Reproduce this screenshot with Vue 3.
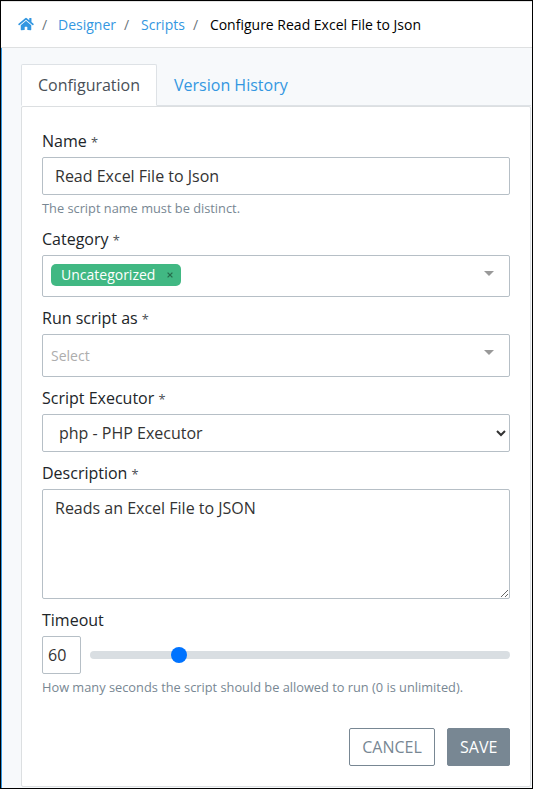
<script setup>
import { ref } from 'vue'

const name = ref('Read Excel File to Json')
const category = ref('Uncategorized')
const executor = ref('php')
const description = ref('Reads an Excel File to JSON')
const timeout = ref(60)
</script>

<template>
  <div class="page">
    <nav class="breadcrumb">
      <a class="home" href="#" aria-label="Home">
        <svg viewBox="0 0 576 512" width="16" height="14">
          <path
            fill="currentColor"
            d="M280.4 148.3 96 300.100V464a16 16 0 0 0 16 16l112.100-.3a16 16 0 0 0 15.900-16V368a16 16 0 0 1 16-16h64a16 16 0 0 1 16 16v95.600a16 16 0 0 0 16 16.100L464 480a16 16 0 0 0 16-16V300L295.700 148.300a12.200 12.200 0 0 0-15.300 0zM571.600 251.500 488 182.600V44a12 12 0 0 0-12-12h-56a12 12 0 0 0-12 12v72.600L318.500 43a48 48 0 0 0-61 0L4.300 251.500a12 12 0 0 0-1.600 16.900l25.500 31a12 12 0 0 0 16.900 1.600l235.200-193.700a12.200 12.200 0 0 1 15.300 0L530.900 301a12 12 0 0 0 16.900-1.600l25.500-31a12 12 0 0 0-1.700-16.900z"
          />
        </svg>
      </a>
      <span class="sep first">/</span>
      <a class="crumb" href="#">Designer</a>
      <span class="sep">/</span>
      <a class="crumb" href="#">Scripts</a>
      <span class="sep">/</span>
      <span class="current">Configure Read Excel File to Json</span>
    </nav>

    <main class="content">
      <div class="tabs">
        <a class="tab active" href="#">Configuration</a>
        <a class="tab" href="#">Version History</a>
      </div>

      <form class="card" @submit.prevent>
        <div class="group">
          <label for="name">Name <small>*</small></label>
          <input id="name" v-model="name" class="control" type="text" />
          <p class="help">The script name must be distinct.</p>
        </div>

        <div class="group">
          <label>Category <small>*</small></label>
          <div class="multi category">
            <span class="tag">{{ category }}
              <svg viewBox="0 0 6 6" width="6" height="6"><path d="M.6.6 5.400 5.400M5.400.6.6 5.400" stroke="#266d4d" stroke-width="1.300" /></svg>
            </span>
            <i class="caret"></i>
          </div>
        </div>

        <div class="group">
          <label>Run script as <small>*</small></label>
          <div class="multi run-as">
            <span class="placeholder">Select</span>
            <i class="caret"></i>
          </div>
        </div>

        <div class="group">
          <label for="executor">Script Executor <small>*</small></label>
          <select id="executor" v-model="executor" class="control">
            <option value="php">php - PHP Executor</option>
          </select>
        </div>

        <div class="group">
          <label for="description">Description <small>*</small></label>
          <textarea id="description" v-model="description" class="control" spellcheck="false"></textarea>
        </div>

        <div class="group">
          <label for="timeout">Timeout</label>
          <div class="timeout">
            <input id="timeout" v-model="timeout" class="control seconds" type="text" />
            <input v-model="timeout" class="range" type="range" min="0" max="300" aria-label="Timeout" />
          </div>
          <p class="help">How many seconds the script should be allowed to run (0 is unlimited).</p>
        </div>

        <div class="actions">
          <button type="button" class="btn outline">CANCEL</button>
          <button type="submit" class="btn solid">SAVE</button>
        </div>
      </form>
    </main>
  </div>
</template>

<style>
body {
  margin: 0;
  overflow: hidden;
}
</style>

<style scoped>
* {
  box-sizing: border-box;
}
.page {
  display: flex;
  flex-direction: column;
  width: 533px;
  height: 789px;
  border: 1px solid #000;
  background: #f7f9fb;
  color: #212529;
  font: 16px/24px 'Open Sans', 'Noto Sans', sans-serif;
}
a {
  color: #3397e1;
  text-decoration: none;
}
.breadcrumb {
  display: flex;
  align-items: center;
  height: 47px;
  padding: 0 0 1px 17px;
  border-top: 1px solid #e4e4e4;
  border-bottom: 1px solid #dee0e1;
  background: #fff;
  font-size: 14px;
  line-height: 21px;
  white-space: nowrap;
}
.home {
  display: flex;
}
.sep {
  width: 25px;
  padding-left: 8px;
  color: #6c757d;
}
.sep.first {
  width: 24px;
}
.current {
  color: #000;
}
.content {
  flex: 1;
  padding: 16px 1px 1px 19px;
  border-left: 1px solid #3397e1;
}
.tabs {
  display: flex;
  height: 42px;
  border-bottom: 1px solid #dee2e6;
}
.tab {
  height: 42px;
  padding: 8px 16px;
  border: 1px solid transparent;
  border-radius: 2px 2px 0 0;
}
.tab.active {
  border-color: #dee2e6 #dee2e6 #fff;
  background: #fff;
  color: #495057;
}
.card {
  height: 681px;
  padding: 22px 20px 20px;
  border: 1px solid #dcdfe1;
  border-radius: 2px;
  background: #fff;
}
.group {
  margin-bottom: 9px;
}
label {
  display: block;
  height: 24px;
  margin-bottom: 4px;
}
small {
  color: #4b4f54;
  font-size: 12.8px;
}
.control {
  display: block;
  width: 100%;
  height: 38px;
  margin: 0;
  padding: 6px 12px;
  border: 1px solid #b6bfc6;
  border-radius: 2px;
  outline: 0;
  background: #fff;
  color: #333;
  font: inherit;
}
textarea.control {
  height: 110px;
  resize: vertical;
}
.help {
  height: 19px;
  margin: 4px 0 0;
  color: #788793;
  font-size: 12.8px;
  line-height: 19px;
}
.multi {
  display: flex;
  align-items: flex-start;
  justify-content: space-between;
  padding: 8px 15px 0 8px;
  border: 1px solid #b6bfc6;
  border-radius: 2px;
  font-size: 14px;
}
.category {
  height: 42px;
}
.run-as {
  height: 43px;
}
.tag {
  display: flex;
  align-items: center;
  justify-content: space-between;
  width: 130px;
  height: 22px;
  padding: 0 8px 0 10px;
  border-radius: 5px;
  background: #41b883;
  color: #fff;
  line-height: 22px;
}
.placeholder {
  padding-top: 1px;
  color: #adadad;
}
.caret {
  margin-top: 7px;
  border: 5px solid transparent;
  border-top-color: #999;
  border-bottom: 0;
}
.timeout {
  display: flex;
  align-items: center;
  gap: 9px;
}
.seconds {
  width: 39px;
  padding: 6px 5px;
}
.range {
  flex: 1;
  min-width: 0;
  height: 24px;
  margin: 0;
  background: transparent;
  appearance: none;
}
.range::-webkit-slider-runnable-track {
  height: 8px;
  border-radius: 4px;
  background: #d9dee2;
}
.range::-webkit-slider-thumb {
  width: 16px;
  height: 16px;
  margin-top: -4px;
  border-radius: 50%;
  background: #0073ff;
  appearance: none;
}
.actions {
  display: flex;
  justify-content: flex-end;
  gap: 12px;
  margin-top: 31px;
}
.btn {
  height: 38px;
  padding: 0 12px;
  border: 1px solid #788793;
  border-radius: 2px;
  font: inherit;
}
.outline {
  width: 86px;
  background: #fff;
  color: #788793;
}
.solid {
  width: 63px;
  background: #788793;
  color: #fff;
}
</style>
